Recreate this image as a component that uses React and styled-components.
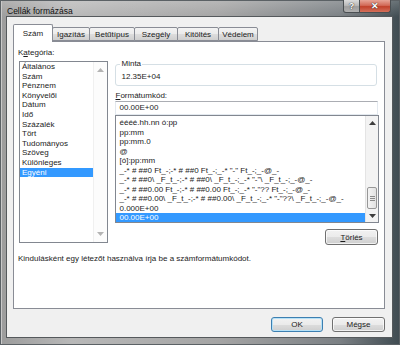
import styled, { createGlobalStyle } from 'styled-components'

const Global = createGlobalStyle`
  body {
    margin: 0;
    font-family: "Liberation Sans", Arial, sans-serif;
    font-size: 8px;
    color: #1b1b1b;
  }
`

const Window = styled.div`
  width: 400px;
  height: 345px;
  box-sizing: border-box;
  display: flex;
  flex-direction: column;
  padding: 0 8px 8px 7px;
  background:
    linear-gradient(to bottom, rgba(255, 255, 255, 0.22), rgba(255, 255, 255, 0) 17px),
    linear-gradient(to right, #9c9c9c 0%, #b8b8b8 18%, #a4a4a4 55%, #7b8084 85%, #3f4b51 100%);
  box-shadow: inset 0 0 0 1px #5b6165, inset 2px 0 0 #c9c9c9;
`
const TitleBar = styled.div`
  height: 17px;
  display: flex;
  align-items: flex-start;
`
const Title = styled.span`
  padding-top: 6px;
  line-height: 10px;
  font-size: 8.5px;
  color: #111;
`
const Captions = styled.div`
  margin-left: auto;
  margin-right: 1px;
  display: flex;
`
const CaptionBtn = styled.div`
  width: ${({ $w }) => $w}px;
  height: 13px;
  box-sizing: border-box;
  border: 1px solid #4a4f52;
  border-top: none;
  display: flex;
  align-items: center;
  justify-content: center;
  color: #fff;
  font-size: 9px;
  font-weight: bold;
  text-shadow: 0 0 1px #333, 0 0 1px #333;
  background: ${({ $red }) => $red
    ? 'linear-gradient(to bottom, #e7a597 0%, #d26a58 45%, #c1412b 55%, #d4705b 100%)'
    : 'linear-gradient(to bottom, #dcdcdc 0%, #b9b9b9 45%, #9e9e9e 55%, #b0b0b0 100%)'};
  border-radius: ${({ $red }) => $red ? '0 0 3px 0' : '0 0 0 3px'};
  & + & { border-left: none; }
`

const Client = styled.div`
  flex: 1;
  background: #f0f0f0;
  box-shadow: 0 0 0 1px #55595c;
  padding: 7px 7px 5px 6px;
  display: flex;
  flex-direction: column;
`
const TabStrip = styled.div`
  height: 17px;
  display: flex;
  align-items: flex-end;
`
const Tab = styled.div`
  position: relative;
  z-index: ${({ $active }) => $active ? 2 : 1};
  width: ${({ $w }) => $w}px;
  height: ${({ $active }) => $active ? 18 : 14}px;
  margin-bottom: ${({ $active }) => $active ? -1 : 0}px;
  margin-right: -1px;
  box-sizing: border-box;
  border: 1px solid #898c95;
  border-bottom: ${({ $active }) => $active ? 'none' : '1px solid #898c95'};
  border-radius: 2px 2px 0 0;
  background: ${({ $active }) => $active
    ? '#fff'
    : 'linear-gradient(to bottom, #f3f3f3 0%, #ebebeb 50%, #dddddd 51%, #cfcfcf 100%)'};
  display: flex;
  align-items: center;
  justify-content: center;
  padding-top: ${({ $active }) => $active ? 0 : 1}px;
`
const Panel = styled.div`
  height: 268px;
  box-sizing: border-box;
  border: 1px solid #898c95;
  background: #fff;
  padding: 6px 5px 0 4px;
  display: flex;
  flex-direction: column;
`
const Columns = styled.div`
  display: flex;
  gap: 7px;
  align-items: flex-start;
`
const LeftCol = styled.div`
  width: 91px;
  display: flex;
  flex-direction: column;
`
const RightCol = styled.div`
  width: 265px;
  display: flex;
  flex-direction: column;
`
const Label = styled.div`
  line-height: 10px;
  margin-bottom: ${({ $mb }) => $mb || 0}px;
  margin-top: ${({ $mt }) => $mt || 0}px;
  u { text-decoration-thickness: 1px; text-underline-offset: 1px; }
`
const ListBox = styled.div`
  height: ${({ $h }) => $h}px;
  margin-left: ${({ $ml }) => $ml || 0}px;
  box-sizing: border-box;
  border: 1px solid #828790;
  background: #fff;
  display: flex;
  overflow: hidden;
`
const Items = styled.div`
  flex: 1;
  padding-top: ${({ $pt }) => $pt}px;
  overflow: hidden;
`
const Item = styled.div`
  height: ${({ $lh }) => $lh}px;
  line-height: ${({ $lh }) => $lh}px;
  padding-left: ${({ $pl }) => $pl}px;
  white-space: nowrap;
  background: ${({ $sel }) => $sel ? '#3399ff' : 'transparent'};
  color: ${({ $sel }) => $sel ? '#fff' : '#1b1b1b'};
`
const Scrollbar = styled.div`
  width: ${({ $w }) => $w}px;
  display: flex;
  flex-direction: column;
  background: ${({ $disabled }) => $disabled ? '#fcfcfc' : '#f3f3f3'};
  border-left: 1px solid ${({ $disabled }) => $disabled ? '#f0f0f0' : '#e4e4e4'};
`
const ArrowBtn = styled.div`
  height: 13px;
  display: flex;
  align-items: center;
  justify-content: center;
`
const Track = styled.div`
  flex: 1;
  display: flex;
  flex-direction: column;
  justify-content: flex-end;
`
const Thumb = styled.div`
  height: 22px;
  margin: 0 1px;
  box-sizing: border-box;
  border: 1px solid #979797;
  border-radius: 2px;
  background: linear-gradient(to right, #f4f4f4, #e2e2e2);
  display: flex;
  flex-direction: column;
  align-items: center;
  justify-content: center;
  gap: 1px;
  span {
    width: 5px;
    height: 1px;
    background: #8a8a8a;
  }
`
const Group = styled.fieldset`
  margin: 11px 2px 0 0;
  padding: 0 4px 1px;
  border: 1px solid #d5dfe5;
  border-radius: 3px;
  min-width: 0;
  legend {
    margin-left: 0;
    padding: 0 1px;
    line-height: 10px;
    color: #1b1b1b;
  }
`
const Sample = styled.div`
  height: 15px;
  line-height: 15px;
  padding-left: 1px;
`
const TextBox = styled.div`
  height: 14px;
  margin-right: 1px;
  box-sizing: border-box;
  border: 1px solid #e3e9ef;
  border-top-color: #abadb3;
  padding-left: 3px;
  line-height: 12px;
  background: #fff;
`
const Button = styled.div`
  width: ${({ $w }) => $w}px;
  height: ${({ $h }) => $h || 15}px;
  box-sizing: border-box;
  border: 1px solid ${({ $def }) => $def ? '#3c7fb1' : '#707070'};
  border-radius: 3px;
  background: linear-gradient(to bottom, #f2f2f2 0%, #ebebeb 50%, #dddddd 51%, #cfcfcf 100%);
  box-shadow: inset 0 0 0 1px ${({ $def }) => $def ? '#b6e1f7' : 'rgba(255,255,255,0.7)'};
  display: flex;
  align-items: center;
  justify-content: center;
  color: #1b1b1b;
  u { text-decoration-thickness: 1px; text-underline-offset: 1px; }
`
const DeleteRow = styled.div`
  display: flex;
  justify-content: flex-end;
  margin: 6px 1px 0 0;
`
const Desc = styled.div`
  margin-top: 9px;
  line-height: 10px;
`
const Footer = styled.div`
  margin-top: auto;
  display: flex;
  justify-content: flex-end;
  gap: 9px;
`

const Arrow = ({ up, color }) => (
  <svg width="7" height="4" viewBox="0 0 7 4">
    <polygon points={up ? '0,4 7,4 3.5,0' : '0,0 7,0 3.5,4'} fill={color} />
  </svg>
)

const tabs = [
  ['Szám', 40, true],
  ['Igazítás', 38],
  ['Betűtípus', 46],
  ['Szegély', 44],
  ['Kitöltés', 42],
  ['Védelem', 40],
]

const categories = [
  'Általános', 'Szám', 'Pénznem', 'Könyvelői', 'Dátum', 'Idő',
  'Százalék', 'Tört', 'Tudományos', 'Szöveg', 'Különleges', 'Egyéni',
]

const formats = [
  'éééé.hh.nn ó:pp',
  'pp:mm',
  'pp:mm.0',
  '@',
  '[ó]:pp:mm',
  '_-* # ##0 Ft_-;-* # ##0 Ft_-;_-* "-" Ft_-;_-@_-',
  '_-* # ##0\\ _F_t_-;-* # ##0\\ _F_t_-;_-* "-"\\ _F_t_-;_-@_-',
  '_-* # ##0.00 Ft_-;-* # ##0.00 Ft_-;_-* "-"?? Ft_-;_-@_-',
  '_-* # ##0.00\\ _F_t_-;-* # ##0.00\\ _F_t_-;_-* "-"??\\ _F_t_-;_-@_-',
  '0.000E+00',
  '00.00E+00',
]

export default function App() {
  return (
    <>
      <Global />
      <Window>
        <TitleBar>
          <Title>Cellák formázása</Title>
          <Captions>
            <CaptionBtn $w={17}>?</CaptionBtn>
            <CaptionBtn $w={31} $red>✕</CaptionBtn>
          </Captions>
        </TitleBar>
        <Client>
          <TabStrip>
            {tabs.map(([name, w, active]) => (
              <Tab key={name} $w={w} $active={active}>{name}</Tab>
            ))}
          </TabStrip>
          <Panel>
            <Columns>
              <LeftCol>
                <Label $mb={3}>K<u>a</u>tegória:</Label>
                <ListBox $h={182} $ml={1}>
                  <Items $pt={0}>
                    {categories.map((c) => (
                      <Item key={c} $lh={9.6} $pl={2} $sel={c === 'Egyéni'}>{c}</Item>
                    ))}
                  </Items>
                  <Scrollbar $w={13} $disabled>
                    <ArrowBtn style={{ height: 16 }}><Arrow up color="#b4b4b4" /></ArrowBtn>
                    <Track />
                    <ArrowBtn style={{ height: 16 }}><Arrow color="#b4b4b4" /></ArrowBtn>
                  </Scrollbar>
                </ListBox>
              </LeftCol>
              <RightCol>
                <Group>
                  <legend>Minta</legend>
                  <Sample>12.35E+04</Sample>
                </Group>
                <Label $mt={5}><u>F</u>ormátumkód:</Label>
                <TextBox>00.00E+00</TextBox>
                <ListBox $h={108}>
                  <Items $pt={2}>
                    {formats.map((f, i) => (
                      <Item key={i} $lh={9.55} $pl={3} $sel={i === formats.length - 1}>{f}</Item>
                    ))}
                  </Items>
                  <Scrollbar $w={12}>
                    <ArrowBtn><Arrow up color="#3d3d3d" /></ArrowBtn>
                    <Track>
                      <Thumb><span /><span /><span /></Thumb>
                    </Track>
                    <ArrowBtn><Arrow color="#3d3d3d" /></ArrowBtn>
                  </Scrollbar>
                </ListBox>
                <DeleteRow>
                  <Button $w={53} $h={16}><u>T</u>örlés</Button>
                </DeleteRow>
              </RightCol>
            </Columns>
            <Desc>Kindulásként egy létezőt használva írja be a számformátumkódot.</Desc>
          </Panel>
          <Footer>
            <Button $w={52} $def>OK</Button>
            <Button $w={53}>Mégse</Button>
          </Footer>
        </Client>
      </Window>
    </>
  )
}
